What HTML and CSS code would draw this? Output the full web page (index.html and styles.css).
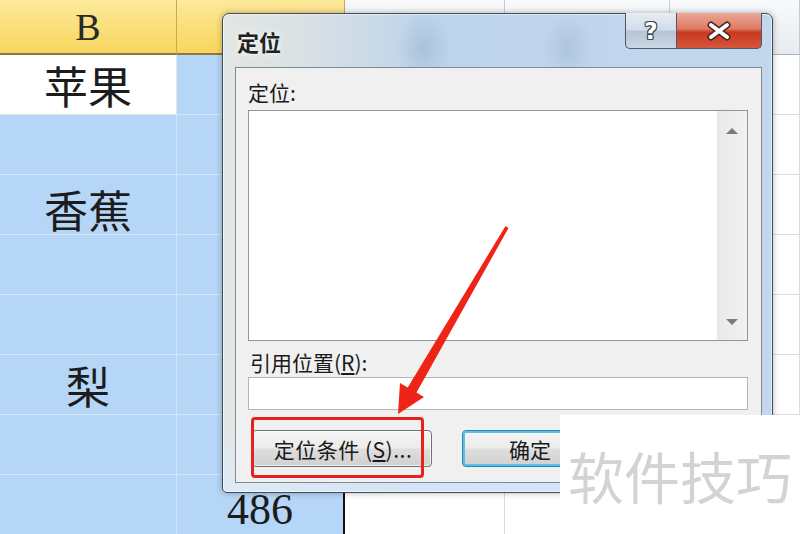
FILE: index.html
```html
<!DOCTYPE html>
<html lang="zh-CN">
<head>
  <meta charset="UTF-8" />
  <meta name="viewport" content="width=device-width, initial-scale=1.0" />
  <title>定位</title>
  <link rel="stylesheet" href="styles.css">
</head>
<body>
  <div class="sheet">
    <div class="hd hd-sel">B</div>
    <div class="hd hd-sel"></div>
    <div class="hd"></div>
    <div class="hd"></div>
    <div class="hd">F</div>

    <div class="cell active">苹果</div>
    <div class="cell sel edge"></div>
    <div class="cell"></div><div class="cell"></div><div class="cell"></div>

    <div class="cell sel"></div>
    <div class="cell sel edge"></div>
    <div class="cell"></div><div class="cell"></div><div class="cell"></div>

    <div class="cell sel lower">香蕉</div>
    <div class="cell sel edge"></div>
    <div class="cell"></div><div class="cell"></div><div class="cell"></div>

    <div class="cell sel"></div>
    <div class="cell sel edge"></div>
    <div class="cell"></div><div class="cell"></div><div class="cell"></div>

    <div class="cell sel"></div>
    <div class="cell sel edge"></div>
    <div class="cell"></div><div class="cell"></div><div class="cell"></div>

    <div class="cell sel">梨</div>
    <div class="cell sel edge"></div>
    <div class="cell"></div><div class="cell"></div><div class="cell"></div>

    <div class="cell sel"></div>
    <div class="cell sel edge"></div>
    <div class="cell"></div><div class="cell"></div><div class="cell"></div>

    <div class="cell sel last"></div>
    <div class="cell sel edge last num">486</div>
    <div class="cell last"></div><div class="cell last"></div><div class="cell last"></div>
  </div>

  <div class="dialog">
    <div class="titlebar">
      <span class="title">定位</span>
      <div class="caption-btns">
        <div class="cap-btn help"><span>?</span></div>
        <div class="cap-btn close">
          <svg width="28" height="20" viewBox="0 0 28 20">
            <path d="M6 4 L22 16 M22 4 L6 16" stroke="#4b2620" stroke-width="7" stroke-linecap="round" fill="none"/>
            <path d="M6 4 L22 16 M22 4 L6 16" stroke="#ffffff" stroke-width="4" stroke-linecap="round" fill="none"/>
          </svg>
        </div>
      </div>
    </div>

    <div class="panel">
      <div class="label">定位:</div>
      <div class="listbox">
        <div class="list-area"></div>
        <div class="scrollbar">
          <span class="arrow-up"></span>
          <span class="arrow-down"></span>
        </div>
      </div>
      <div class="label label-ref">引用位置(<u>R</u>):</div>
      <div class="textbox"></div>
      <div class="btn-row">
        <button class="btn btn-special">定位条件 (<u>S</u>)...</button>
        <button class="btn btn-ok">确定</button>
      </div>
    </div>
  </div>

  <div class="mark-box"></div>

  <svg class="arrow" width="800" height="534" viewBox="0 0 800 534">
    <polygon points="508.5,228 416.5,392.5 424,397 398,414 400,383 407.7,387.5 505.5,226" fill="#ee2416"/>
  </svg>

  <div class="watermark">软件技巧</div>
</body>
</html>
```

FILE: styles.css
```css
* {
  box-sizing: border-box;
  margin: 0;
  padding: 0;
}

body {
  width: 800px;
  height: 534px;
  overflow: hidden;
  background: #fff;
  position: relative;
  font-family: "Noto Sans CJK SC", "Noto Sans", sans-serif;
}

/* spreadsheet behind the dialog */
.sheet {
  display: grid;
  grid-template-columns: 177px 168px 160px 165px 130px;
  grid-template-rows: 55px repeat(7, 60px) 59px;
}

.hd {
  display: flex;
  align-items: center;
  justify-content: center;
  background: linear-gradient(#f8f9fb, #e7eaef);
  border-right: 1px solid #c6cbd3;
  border-bottom: 1px solid #a9b0ba;
  font-family: "Liberation Serif", serif;
  font-size: 38px;
  color: #333;
}

.hd:last-child {
  justify-content: flex-start;
  padding-left: 104px;
  border-right: none;
}

.hd-sel {
  background: linear-gradient(#fde99b, #f8d55c);
  border-right-color: #caa850;
  border-bottom: 2px solid #8c7641;
  color: #2a2a2a;
}

.cell {
  display: flex;
  align-items: center;
  justify-content: center;
  background: #fff;
  border-right: 1px solid #dadcdd;
  border-bottom: 1px solid #dadcdd;
  font-size: 44px;
  color: #1c1c1c;
}

.cell.sel {
  background: #b6d6f8;
  border-color: #d4e5f7;
}

.cell.active {
  border-color: #e4e4e4;
}

.cell.edge {
  border-right: 2px solid #111;
}

.cell.last {
  border-bottom: none;
}

.cell.lower {
  padding-top: 8px;
}

.num {
  align-items: flex-start;
  font-family: "Liberation Serif", serif;
  font-size: 44px;
  line-height: 48px;
  padding-top: 11px;
}

/* the Aero dialog */
.dialog {
  position: absolute;
  left: 222px;
  top: 13px;
  width: 551px;
  height: 480px;
  display: flex;
  flex-direction: column;
  padding: 0 10px 9px 12px;
  border: 1px solid #414c57;
  border-radius: 7px 7px 5px 5px;
  background:
    radial-gradient(ellipse 28px 34px at 200px 34px, rgba(150, 172, 198, 0.45), transparent),
    radial-gradient(ellipse 26px 34px at 345px 34px, rgba(150, 172, 198, 0.4), transparent),
    linear-gradient(180deg, rgba(255, 255, 255, 0) 85%, rgba(220, 236, 252, 0.7) 100%),
    linear-gradient(90deg, #e3e7e5 0, #d8e0e4 16%, #bed4ec 36%, #c2d7ee 100%);
  box-shadow: inset 0 0 0 1px rgba(255, 255, 255, 0.55), 0 0 6px rgba(0, 0, 0, 0.3);
}

.titlebar {
  height: 53px;
  display: flex;
  align-items: center;
  padding-left: 2px;
  position: relative;
}

.title {
  font-size: 22px;
  font-weight: bold;
  color: #222;
  text-shadow: 0 0 6px rgba(255, 255, 255, 0.9);
}

.caption-btns {
  position: absolute;
  top: -1px;
  right: 0;
  display: flex;
  height: 36px;
}

.cap-btn {
  height: 36px;
  display: flex;
  align-items: center;
  justify-content: center;
  border: 1px solid #4f5a66;
  border-top: none;
}

.help {
  width: 51px;
  border-radius: 0 0 0 5px;
  border-right: none;
  background: linear-gradient(#e6ecf2 0, #d3dde8 48%, #b6c6d7 52%, #c9d6e3 100%);
}

.help span {
  font-family: "DejaVu Sans", sans-serif;
  font-weight: bold;
  font-size: 23px;
  color: #fff;
  text-shadow: 1px 0 #3d4650, -1px 0 #3d4650, 0 1px #3d4650, 0 -1px #3d4650,
    1px 1px #3d4650, -1px -1px #3d4650, 1px -1px #3d4650, -1px 1px #3d4650;
}

.close {
  width: 86px;
  border-radius: 0 0 5px 0;
  background: linear-gradient(#eba797 0, #df7a63 45%, #c8391f 55%, #d4573d 100%);
}

.panel {
  flex: 1;
  display: flex;
  flex-direction: column;
  background: #f0f0f0;
  border: 1px solid #808a95;
  padding: 12px 13px 0 12px;
}

.label {
  font-size: 21px;
  line-height: 24px;
  color: #1a1a1a;
}

.label-ref {
  margin-top: 9px;
  padding-left: 2px;
}

.label u,
.btn u {
  text-underline-offset: 2px;
}

.listbox {
  margin-top: 6px;
  height: 231px;
  display: flex;
  background: #fff;
  border: 1px solid #8f959b;
}

.list-area {
  flex: 1;
}

.scrollbar {
  width: 30px;
  display: flex;
  flex-direction: column;
  align-items: center;
  justify-content: space-between;
  padding: 17px 0 15px;
  background: linear-gradient(90deg, #e9e9e9, #f1f1f1);
}

.arrow-up,
.arrow-down {
  width: 0;
  height: 0;
  border-left: 6px solid transparent;
  border-right: 6px solid transparent;
}

.arrow-up {
  border-bottom: 6px solid #7b7b7b;
}

.arrow-down {
  border-top: 6px solid #7b7b7b;
}

.textbox {
  margin-top: 3px;
  height: 33px;
  background: #fff;
  border: 1px solid #b3b5b9;
}

.btn-row {
  margin-top: 20px;
  display: flex;
  gap: 30px;
  padding-left: 4px;
}

.btn {
  height: 37px;
  font-family: "Noto Sans CJK SC", sans-serif;
  font-size: 21px;
  color: #1a1a1a;
  border: 1px solid #707070;
  border-radius: 4px;
  background: linear-gradient(#f4f4f4 0, #ececec 48%, #dedede 52%, #d0d0d0 100%);
  box-shadow: inset 0 0 0 1px rgba(255, 255, 255, 0.7);
}

.btn-special {
  width: 180px;
  padding-left: 2px;
  letter-spacing: 0.5px;
  white-space: nowrap;
}

.btn-ok {
  width: 130px;
  padding-left: 6px;
  border-color: #3a7eb0;
  box-shadow: inset 0 0 0 2px #5ac1ec;
}

/* annotations over the screenshot */
.mark-box {
  position: absolute;
  left: 251px;
  top: 417px;
  width: 173px;
  height: 61px;
  border: 3px solid #e8221a;
  border-radius: 4px;
}

.arrow {
  position: absolute;
  left: 0;
  top: 0;
  pointer-events: none;
}

.watermark {
  position: absolute;
  left: 560px;
  top: 415px;
  width: 240px;
  height: 119px;
  display: flex;
  align-items: center;
  justify-content: center;
  background: #fff;
  font-size: 56px;
  line-height: 1;
  color: #d3d3d3;
}
```
